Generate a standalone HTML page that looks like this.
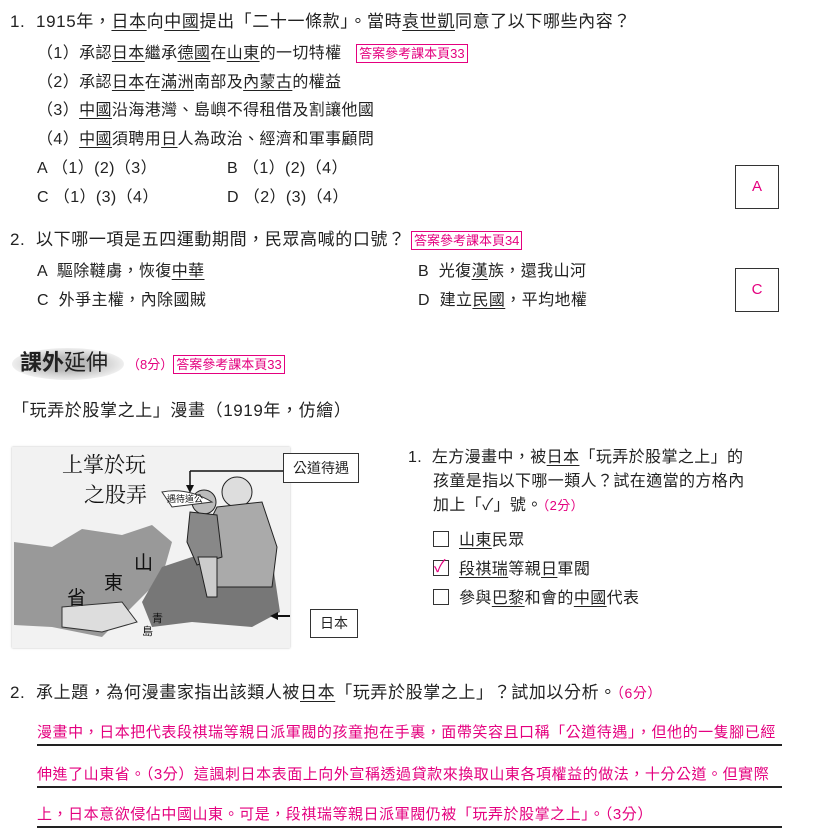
<!DOCTYPE html>
<html><head><meta charset="utf-8"><style>
body{margin:0;width:818px;height:840px;background:#fff;position:relative;font-family:"Liberation Sans","Noto Sans CJK TC",sans-serif;color:#222;overflow:hidden}
.a{position:absolute;white-space:nowrap;line-height:1}
.q{font-size:17px;letter-spacing:0.6px}
.s{font-size:16px;letter-spacing:0.4px}
u{text-decoration:underline;text-underline-offset:3px}
.pk{color:#e4007f}
.ref{border:1px solid #e4007f;color:#e4007f;font-size:13px;padding:1px 2px;letter-spacing:0}
.box{position:absolute;border:1px solid #333;width:42px;height:42px;text-align:center;line-height:42px;font-size:15px;color:#e4007f}
.cb{display:inline-block;width:14px;height:14px;border:1.5px solid #333;vertical-align:-2px;margin-right:10px;position:relative}
.ln{position:absolute;left:37px;width:745px;border-top:2px solid #222}
.lbl{position:absolute;border:1px solid #333;background:#fff;font-size:14px;text-align:center}
.ans{font-size:15px;letter-spacing:0.55px}
</style></head><body>
<div class="a q" style="left:10px;top:13px">1.&nbsp; 1915年，<u>日本</u>向<u>中國</u>提出「二十一條款」。當時<u>袁世凱</u>同意了以下哪些內容？</div>
<div class="a s" style="left:37px;top:46px">（1）承認<u>日本</u>繼承<u>德國</u>在<u>山東</u>的一切特權 &nbsp; <span class="ref">答案參考課本頁33</span></div>
<div class="a s" style="left:37px;top:75px">（2）承認<u>日本</u>在<u>滿洲</u>南部及<u>內蒙古</u>的權益</div>
<div class="a s" style="left:37px;top:103px">（3）<u>中國</u>沿海港灣、島嶼不得租借及割讓他國</div>
<div class="a s" style="left:37px;top:132px">（4）<u>中國</u>須聘用<u>日</u>人為政治、經濟和軍事顧問</div>
<div class="a s" style="left:37px;top:161px">A （1）(2)（3）</div>
<div class="a s" style="left:227px;top:161px">B （1）(2)（4）</div>
<div class="a s" style="left:37px;top:190px">C （1）(3)（4）</div>
<div class="a s" style="left:227px;top:190px">D （2）(3)（4）</div>
<div class="box" style="left:735px;top:165px">A</div>

<div class="a q" style="left:10px;top:231px">2.&nbsp; 以下哪一項是五四運動期間，民眾高喊的口號？ <span class="ref">答案參考課本頁34</span></div>
<div class="a s" style="left:37px;top:264px">A &nbsp;驅除韃虜，恢復<u>中華</u></div>
<div class="a s" style="left:418px;top:264px">B &nbsp;光復<u>漢</u>族，還我山河</div>
<div class="a s" style="left:37px;top:293px">C &nbsp;外爭主權，內除國賊</div>
<div class="a s" style="left:418px;top:293px">D &nbsp;建立<u>民國</u>，平均地權</div>
<div class="box" style="left:735px;top:268px">C</div>

<div class="a" style="left:12px;top:348px;width:112px;height:32px;background:radial-gradient(ellipse,#bbb 30%,#eee 70%,#fff 100%);border-radius:50%"></div>
<div class="a" style="left:20px;top:352px;font-size:22px;font-weight:bold;color:#222">課外<span style="font-weight:normal">延伸</span></div>
<div class="a" style="left:127px;top:358px;font-size:13px;color:#e4007f">（8分）<span class="ref">答案參考課本頁33</span></div>
<div class="a q" style="left:12px;top:402px">「玩弄於股掌之上」漫畫（1919年，仿繪）</div>

<div class="a" style="left:12px;top:447px;width:278px;height:201px;background:#f2f2f2;box-shadow:0 0 2px #bbb">
<svg width="278" height="201" viewBox="0 0 278 201">
<path d="M2 95 L40 100 L70 82 L110 88 L140 78 L160 95 L150 130 L120 160 L90 190 L40 180 L2 178Z" fill="#999"/>
<path d="M150 120 L180 110 L230 110 L262 125 L268 165 L240 180 L180 175 L140 180 L130 155Z" fill="#777"/>
<path d="M50 160 L110 155 L125 175 L90 185 L50 180Z" fill="#ddd" stroke="#333"/>
<circle cx="225" cy="45" r="15" fill="#ddd" stroke="#222"/>
<path d="M205 60 L250 55 L265 100 L260 140 L200 140 L190 90Z" fill="#aaa" stroke="#222"/>
<circle cx="192" cy="55" r="12" fill="#bbb" stroke="#222"/>
<path d="M178 65 L205 68 L210 110 L185 118 L175 95Z" fill="#888" stroke="#222"/>
<path d="M186 110 L205 110 L205 150 L195 150Z" fill="#ccc" stroke="#222"/>
<path d="M150 45 Q175 40 200 55 L160 60Z" fill="#fff" stroke="#333"/>
<text x="50" y="25" font-size="21" fill="#111" font-family="Noto Serif CJK SC,serif">上掌於玩</text>
<text x="72" y="55" font-size="21" fill="#111" font-family="Noto Serif CJK SC,serif">之股弄</text>
<text x="155" y="55" font-size="9" fill="#111">遇待道公</text>
<text x="122" y="122" font-size="19" fill="#111">山</text>
<text x="92" y="142" font-size="19" fill="#111">東</text>
<text x="55" y="157" font-size="19" fill="#111">省</text>
<text x="140" y="175" font-size="11" fill="#111">青</text><text x="130" y="188" font-size="11" fill="#111">島</text>
<path d="M178 24 L272 24 M178 24 L178 40" stroke="#111" stroke-width="1.5" fill="none"/><path d="M174 38 L178 46 L182 38Z" fill="#111"/>
<path d="M262 169 L298 169" stroke="#111" stroke-width="2"/><path d="M258 169 L266 165 L266 173Z" fill="#111"/>
</svg></div>
<div class="lbl" style="left:283px;top:453px;width:74px;height:28px;line-height:28px">公道待遇</div>
<div class="lbl" style="left:310px;top:609px;width:46px;height:27px;line-height:27px">日本</div>

<div class="a s" style="left:408px;top:450px">1.&nbsp; 左方漫畫中，被<u>日本</u>「玩弄於股掌之上」的</div>
<div class="a s" style="left:433px;top:474px">孩童是指以下哪一類人？試在適當的方格內</div>
<div class="a s" style="left:433px;top:498px">加上「✓」號。<span class="pk" style="font-size:13px">（2分）</span></div>
<div class="a s" style="left:433px;top:531px"><span class="cb"></span><u>山東</u>民眾</div>
<div class="a s" style="left:433px;top:560px"><span class="cb"><span style="position:absolute;left:0;top:-3px;color:#e4007f;font-size:17px">✓</span></span><u>段祺瑞</u>等親<u>日</u>軍閥</div>
<div class="a s" style="left:433px;top:589px"><span class="cb"></span>參與<u>巴黎</u>和會的<u>中國</u>代表</div>

<div class="a q" style="left:10px;top:684px">2.&nbsp; 承上題，為何漫畫家指出該類人被<u>日本</u>「玩弄於股掌之上」？試加以分析。<span class="pk" style="font-size:14px">（6分）</span></div>
<div class="a pk ans" style="left:37px;top:725px">漫畫中，日本把代表段祺瑞等親日派軍閥的孩童抱在手裏，面帶笑容且口稱「公道待遇」，但他的一隻腳已經</div>
<div class="ln" style="top:744px"></div>
<div class="a pk ans" style="left:37px;top:767px">伸進了山東省。（3分）這諷刺日本表面上向外宣稱透過貸款來換取山東各項權益的做法，十分公道。但實際</div>
<div class="ln" style="top:786px"></div>
<div class="a pk ans" style="left:37px;top:807px">上，日本意欲侵佔中國山東。可是，段祺瑞等親日派軍閥仍被「玩弄於股掌之上」。（3分）</div>
<div class="ln" style="top:826px"></div>
</body></html>
